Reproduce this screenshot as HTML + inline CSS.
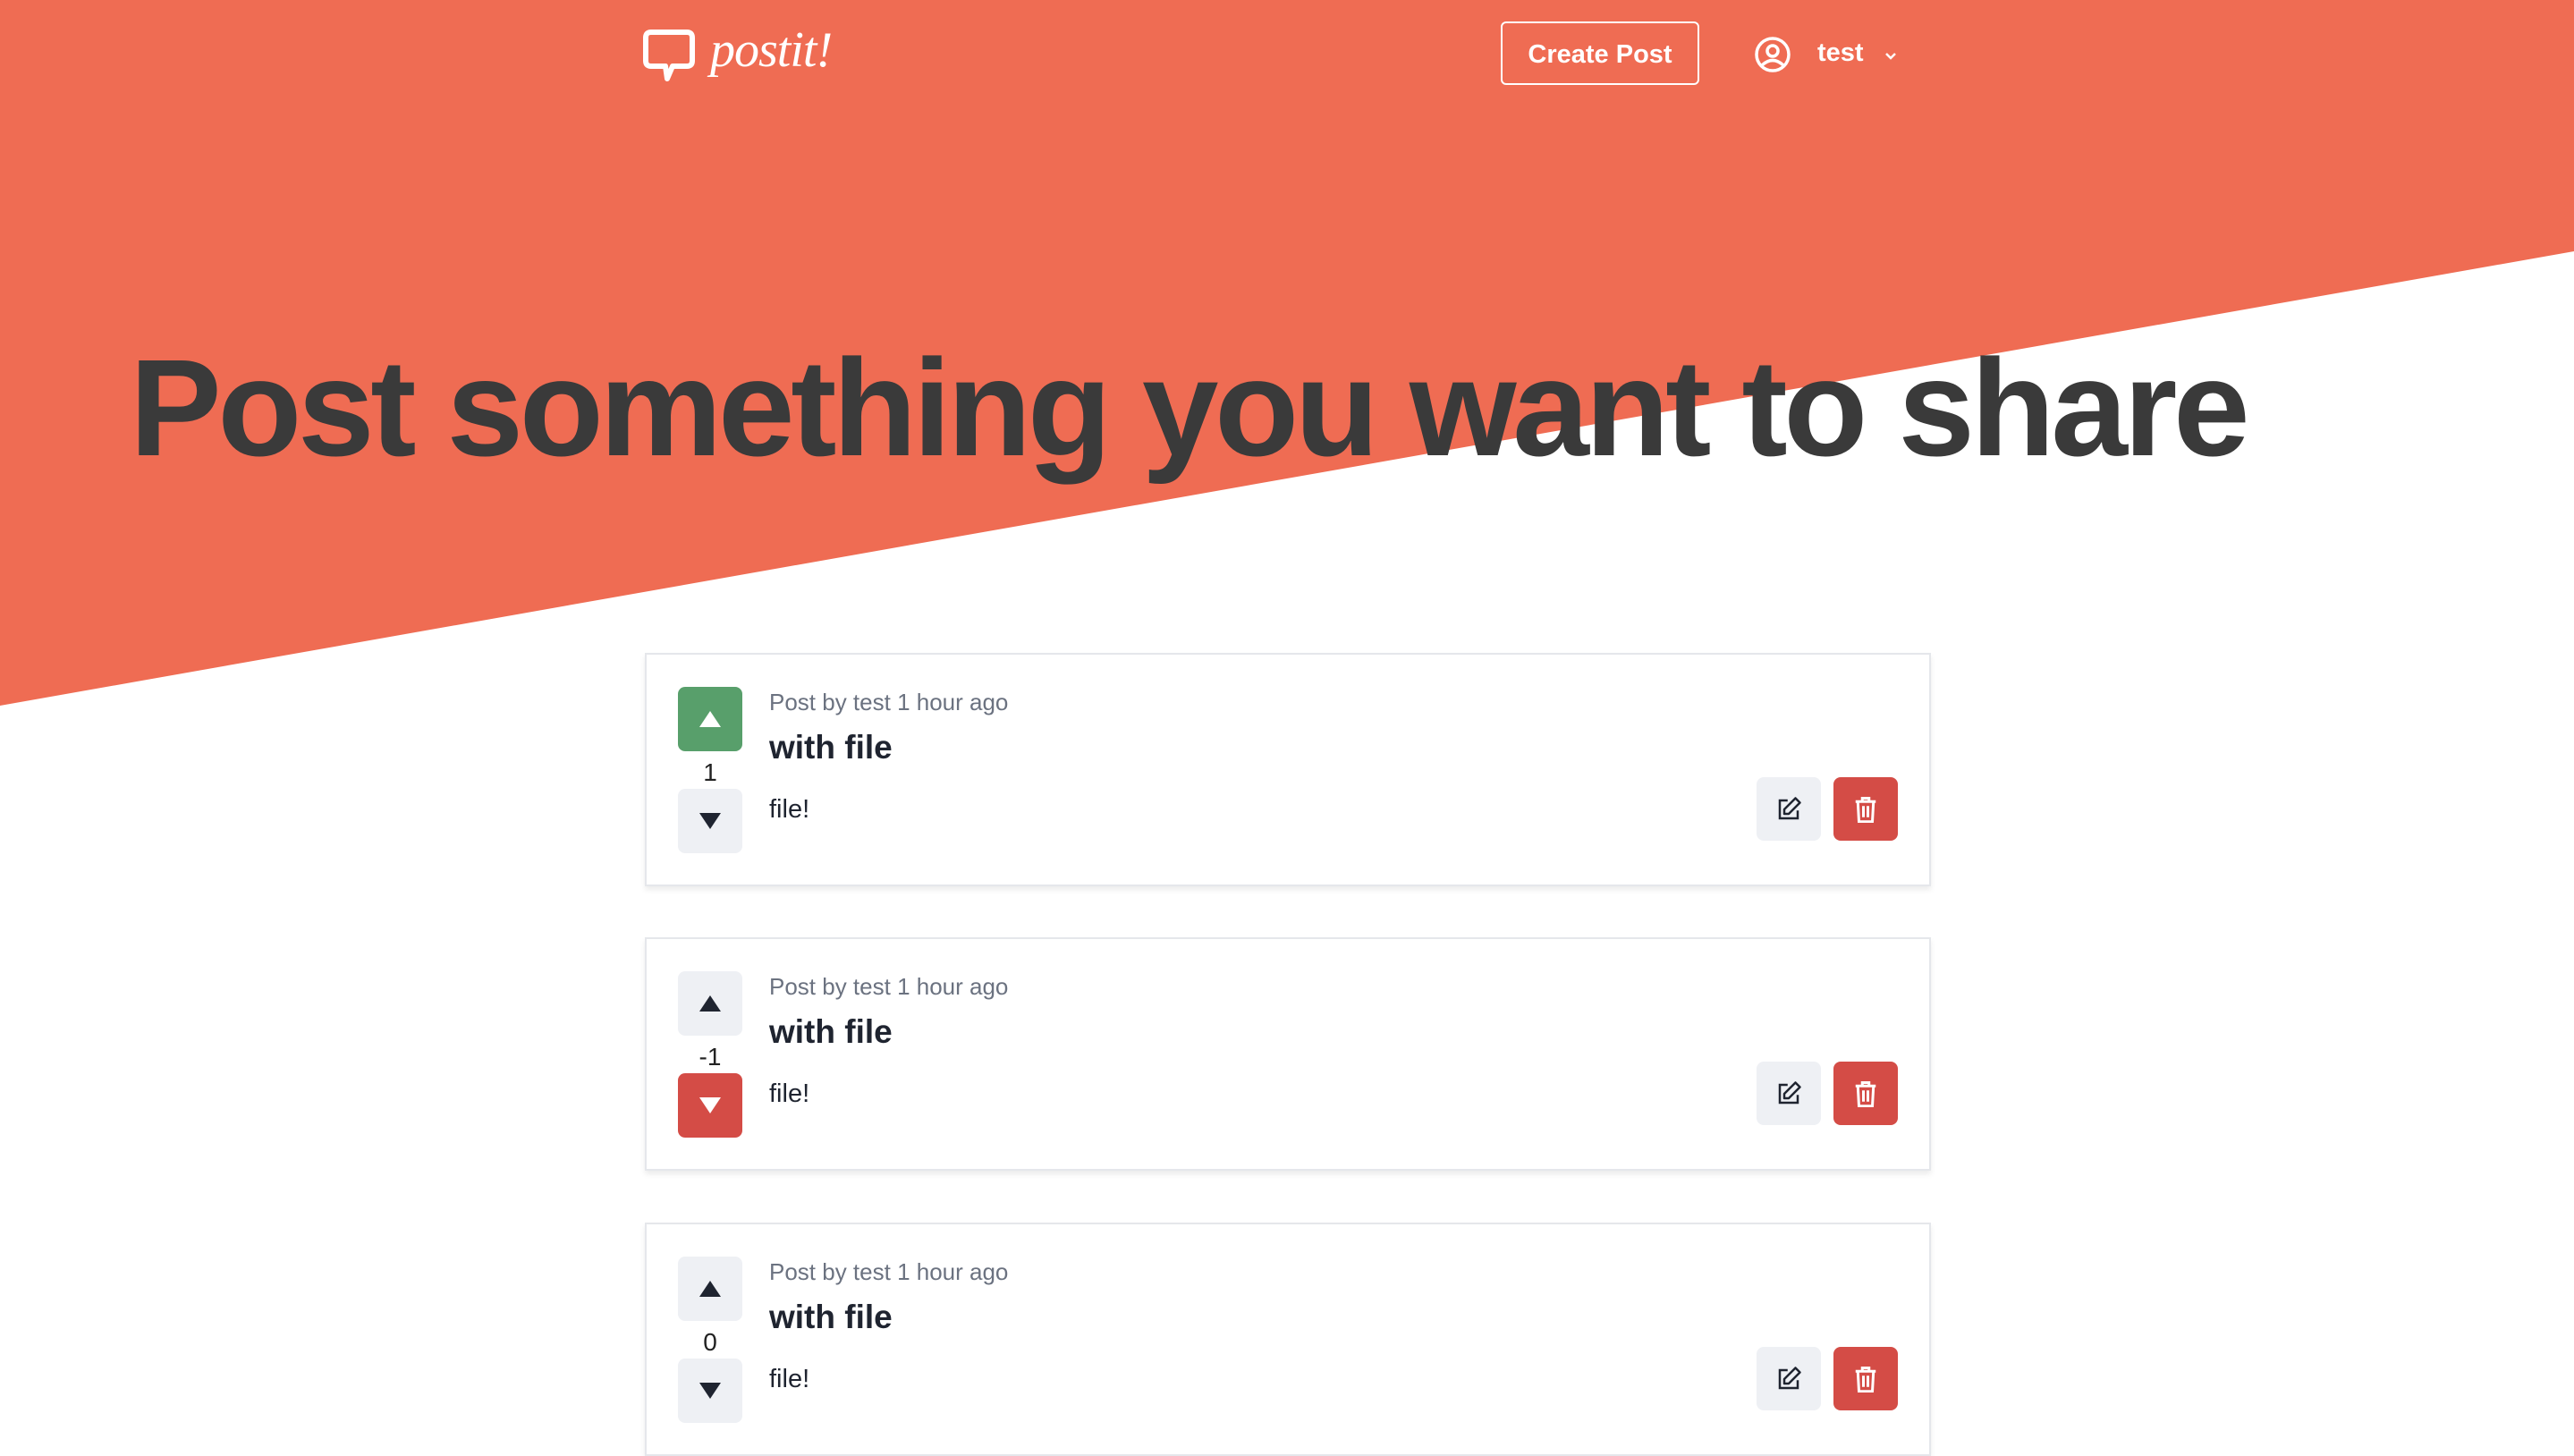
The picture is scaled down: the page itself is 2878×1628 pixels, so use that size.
<!DOCTYPE html>
<html><head><meta charset="utf-8"><style>
*{margin:0;padding:0;box-sizing:border-box}
body{width:2878px;height:1570px;overflow:hidden;background:#fff;font-family:"Liberation Sans",sans-serif;position:relative}
.bg{position:absolute;left:0;top:0}
.abs{position:absolute}
h1{position:absolute;left:145px;top:379px;font-size:154px;font-weight:bold;color:#3a3a3a;letter-spacing:-4.4px;white-space:nowrap;line-height:1}
.card{position:absolute;left:721px;width:1438px;height:261px;background:#fff;border:2px solid #e5e7eb;box-shadow:0 4px 6px rgba(0,0,0,0.08)}
.vb{position:absolute;left:35px;width:72px;height:72px;border-radius:8px;background:#eef0f4;display:flex;align-items:center;justify-content:center}
.cnt{position:absolute;left:35px;width:72px;text-align:center;font-size:28px;color:#222;line-height:1}
.meta{position:absolute;left:137px;top:38px;font-size:26px;color:#6b7280}
.title{position:absolute;left:137px;top:83px;font-size:37px;font-weight:bold;color:#1f2430}
.body{position:absolute;left:137px;top:157px;font-size:29px;color:#1f2430}
.ed{position:absolute;left:1241px;top:137px;width:72px;height:71px;border-radius:8px;background:#eef0f4;display:flex;align-items:center;justify-content:center}
.dl{position:absolute;left:1327px;top:137px;width:72px;height:71px;border-radius:8px;background:#d44c46;display:flex;align-items:center;justify-content:center}
.green{background:#589f6b}.red{background:#d44c46}
</style></head><body>
<svg class="bg" width="2878" height="1570"><polygon points="0,0 2878,0 2878,281 0,789" fill="#ef6c53"/></svg>

<svg class="abs" style="left:718px;top:32px" width="60" height="62" viewBox="0 0 60 62"><path d="M10 4 H50 Q56 4 56 10 V36 Q56 42 50 42 H34 L28 56 L26 42 H10 Q4 42 4 36 V10 Q4 4 10 4 Z" fill="none" stroke="#fff" stroke-width="6" stroke-linejoin="round"/></svg>
<div class="abs" style="left:794px;top:24px;font-family:'Liberation Serif',serif;font-style:italic;font-size:56px;color:#fff;letter-spacing:-1px">postit!</div>

<div class="abs" style="left:1678px;top:24px;width:222px;height:71px;border:2px solid #fff;border-radius:6px;color:#fff;font-size:29px;font-weight:bold;display:flex;align-items:center;justify-content:center;padding-top:3px">Create Post</div>
<svg class="abs" style="left:1961px;top:40px" width="42" height="42" viewBox="0 0 42 42"><circle cx="21" cy="21" r="18" fill="none" stroke="#fff" stroke-width="3.5"/><circle cx="21" cy="17" r="6" fill="none" stroke="#fff" stroke-width="3.5"/><path d="M9 33 Q21 22 33 33" fill="none" stroke="#fff" stroke-width="3.5"/></svg>
<div class="abs" style="left:2032px;top:43px;font-size:29px;font-weight:bold;color:#fff">test</div>
<svg class="abs" style="left:2106px;top:57px" width="16" height="12" viewBox="0 0 16 12"><path d="M3 3 L8 8 L13 3" fill="none" stroke="#fff" stroke-width="2.5"/></svg>

<h1>Post something you want to share</h1>

<div class="card" style="top:730px">
<div class="vb green" style="top:36px"><svg width="24" height="18"><polygon points="12,0 24,18 0,18" fill="#fff"/></svg></div>
<div class="cnt" style="top:118px">1</div>
<div class="vb" style="top:150px"><svg width="24" height="18"><polygon points="0,0 24,0 12,18" fill="#1f2430"/></svg></div>
<div class="meta">Post by test 1 hour ago</div><div class="title">with file</div><div class="body">file!</div>
<div class="ed"><svg width="30" height="30" viewBox="0 0 24 24"><path d="M11 4H4v16h16v-7" fill="none" stroke="#1f2430" stroke-width="2"/><path d="M18 2l4 4-10 10H8v-4z" fill="none" stroke="#1f2430" stroke-width="2" stroke-linejoin="round"/></svg></div>
<div class="dl"><svg width="26" height="30" viewBox="0 0 20 24"><path d="M1 5h18M7 5V2h6v3M3 5l1 18h12l1-18M8 9v10M12 9v10" fill="none" stroke="#fff" stroke-width="2.4"/></svg></div>
</div>

<div class="card" style="top:1048px">
<div class="vb" style="top:36px"><svg width="24" height="18"><polygon points="12,0 24,18 0,18" fill="#1f2430"/></svg></div>
<div class="cnt" style="top:118px">-1</div>
<div class="vb red" style="top:150px"><svg width="24" height="18"><polygon points="0,0 24,0 12,18" fill="#fff"/></svg></div>
<div class="meta">Post by test 1 hour ago</div><div class="title">with file</div><div class="body">file!</div>
<div class="ed"><svg width="30" height="30" viewBox="0 0 24 24"><path d="M11 4H4v16h16v-7" fill="none" stroke="#1f2430" stroke-width="2"/><path d="M18 2l4 4-10 10H8v-4z" fill="none" stroke="#1f2430" stroke-width="2" stroke-linejoin="round"/></svg></div>
<div class="dl"><svg width="26" height="30" viewBox="0 0 20 24"><path d="M1 5h18M7 5V2h6v3M3 5l1 18h12l1-18M8 9v10M12 9v10" fill="none" stroke="#fff" stroke-width="2.4"/></svg></div>
</div>

<div class="card" style="top:1367px">
<div class="vb" style="top:36px"><svg width="24" height="18"><polygon points="12,0 24,18 0,18" fill="#1f2430"/></svg></div>
<div class="cnt" style="top:118px">0</div>
<div class="vb" style="top:150px"><svg width="24" height="18"><polygon points="0,0 24,0 12,18" fill="#1f2430"/></svg></div>
<div class="meta">Post by test 1 hour ago</div><div class="title">with file</div><div class="body">file!</div>
<div class="ed"><svg width="30" height="30" viewBox="0 0 24 24"><path d="M11 4H4v16h16v-7" fill="none" stroke="#1f2430" stroke-width="2"/><path d="M18 2l4 4-10 10H8v-4z" fill="none" stroke="#1f2430" stroke-width="2" stroke-linejoin="round"/></svg></div>
<div class="dl"><svg width="26" height="30" viewBox="0 0 20 24"><path d="M1 5h18M7 5V2h6v3M3 5l1 18h12l1-18M8 9v10M12 9v10" fill="none" stroke="#fff" stroke-width="2.4"/></svg></div>
</div>
</body></html>
